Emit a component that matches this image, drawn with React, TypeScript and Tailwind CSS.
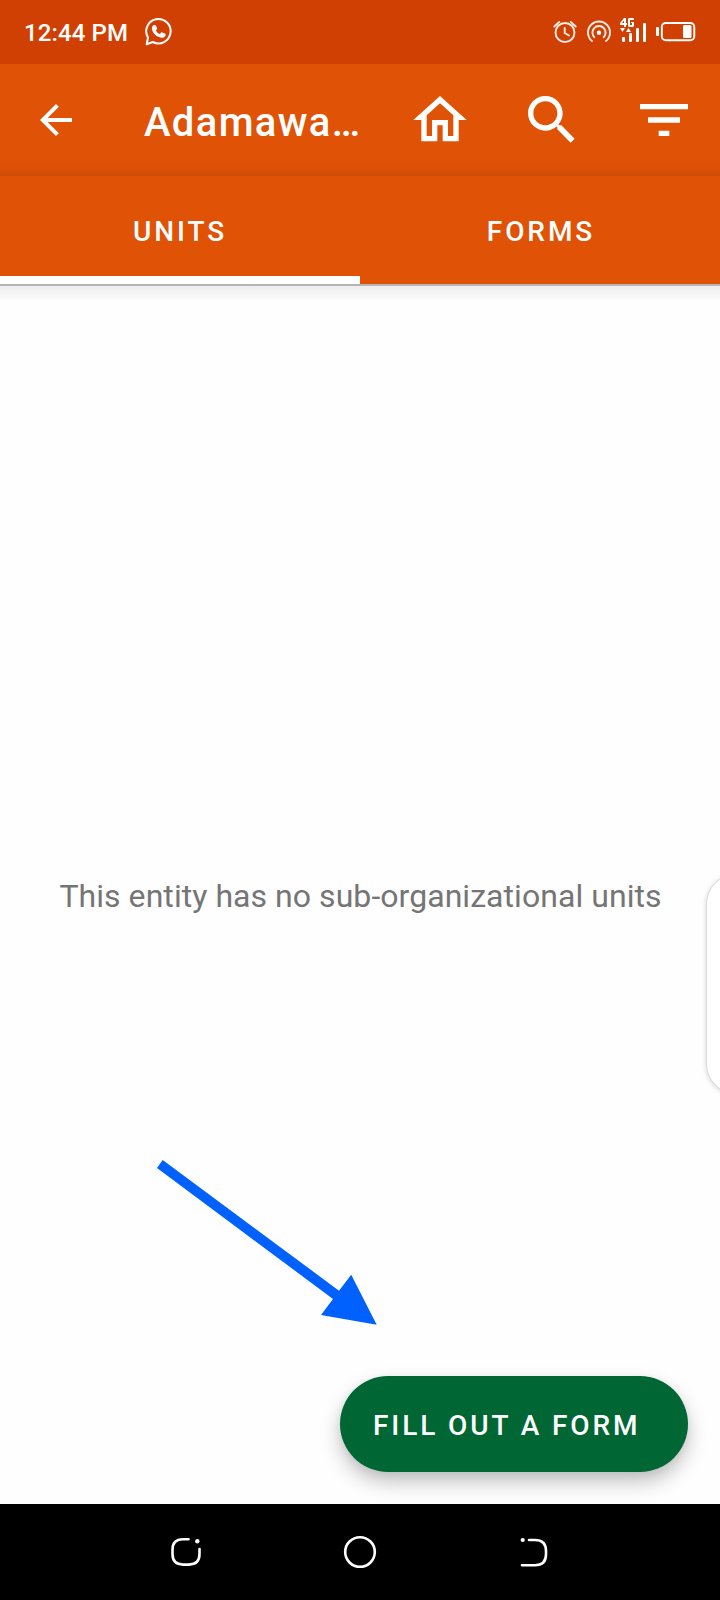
function WhatsAppIcon() {
  return (
    <svg className="ml-4 h-[30px] w-[30px]" viewBox="0 0 30 30" fill="none">
      <path d="M2.700 27.300 L4 20.500 A12.200 12.200 0 1 1 8.800 25 Z" stroke="#fff" strokeWidth="2" strokeLinejoin="round" />
      <path d="M9.900 8c.9-.3 1.700 0 2.100.8l1 2.200c.2.600 0 1.100-.3 1.500l-.8.9c.9 1.700 2.100 2.800 3.900 3.500l1.200-1.200c.4-.4.900-.5 1.400-.3l2.500 1.200c.6.200.8.8.7 1.400-.3 2-2.200 3-4.100 2.700-5.200-.8-9.100-4.700-9.600-9-.1-1.700.7-3.200 2-3.700z" fill="#fff" />
    </svg>
  );
}

function StatusIcons() {
  return (
    <svg className="ml-auto h-[64px] w-[150px]" viewBox="550 0 150 64" fill="none" stroke="#fff">
      <g stroke="#fff" strokeOpacity=".9">
        <circle cx="565" cy="32.500" r="9.500" strokeWidth="1.900" />
        <path d="M564.700 28v5l4.300 2.500" strokeWidth="1.900" strokeLinecap="round" />
        <path d="M554.300 26.500l5-4.600M575.700 26.500l-5-4.600" strokeWidth="1.900" strokeLinecap="round" />
        <path d="M592.600 41.500a11 11 0 1 1 12.800 0" strokeWidth="1.900" />
        <path d="M594.800 37.700a6.600 6.600 0 1 1 8.400 0" strokeWidth="1.900" />
      </g>
      <circle cx="599" cy="32.700" r="2.200" fill="#fff" stroke="none" />
      <g fill="#fff" stroke="none">
        <path d="M620 28h5l-2.500 4zM626 32h5l-2.500-4z" />
        <rect x="622" y="37" width="3" height="5" rx="1" />
        <rect x="629" y="33" width="3" height="9" rx="1" />
        <rect x="636" y="28" width="3" height="14" rx="1" />
        <rect x="643" y="23" width="3" height="19" rx="1" />
        <rect x="656" y="27" width="3" height="9" rx="1" />
        <rect x="683" y="25" width="8.500" height="13" rx="1.500" />
        <path d="M624 18h2v5h1v2h-1v2h-2v-2h-4v-2l4-5zM624 20.500L622 23h2z" />
        <path d="M629 18h4l1 1v1h-4v5h2v-2h-1v-1h3v4l-1 1h-4l-1-1v-7z" />
      </g>
      <rect x="661.800" y="23" width="32.500" height="17.200" rx="4" strokeWidth="1.900" />
    </svg>
  );
}

function Glyph({ d, className }: { d: string; className: string }) {
  return (
    <svg viewBox="0 0 24 24" fill="#fff" className={className}>
      <path d={d} />
    </svg>
  );
}

const BACK = "M20 11H7.830l5.590-5.590L12 4l-8 8 8 8 1.410-1.410L7.830 13H20v-2z";
const HOME = "M12 5.690l5 4.500V18h-2v-6H9v6H7v-7.810l5-4.500M12 3L2 12h3v8h6v-6h2v6h6v-8h3L12 3z";
const SEARCH =
  "M15.500 14h-.79l-.28-.27C15.410 12.590 16 11.110 16 9.500 16 5.910 13.090 3 9.500 3S3 5.910 3 9.500 5.910 16 9.500 16c1.610 0 3.090-.59 4.230-1.570l.27.28v.79l5 4.990L20.490 19l-4.990-5zm-6 0C7.010 14 5 11.990 5 9.500S7.010 5 9.500 5 14 7.010 14 9.500 11.990 14 9.500 14z";
const FILTER = "M10 18h4v-2h-4v2zM3 6v2h18V6H3zm3 7h12v-2H6v2z";

export default function App() {
  return (
    <div className="relative flex h-[1600px] w-[720px] flex-col overflow-hidden bg-[#fefefe] font-['Roboto',sans-serif]">
      <div className="flex h-16 shrink-0 items-center bg-[#d04002] pl-6 text-white">
        <span className="pt-0.5 text-[24px] leading-7 font-medium tracking-[0.12px] whitespace-nowrap">12:44 PM</span>
        <WhatsAppIcon />
        <div className="ml-auto pr-5">
          <StatusIcons />
        </div>
      </div>

      <header className="flex h-28 shrink-0 items-center bg-[linear-gradient(to_bottom,#e05206_0,#e05206_94px,#db5006_106px,#cc4b06_112px)] pr-6 pl-8 text-white">
        <Glyph d={BACK} className="h-12 w-12" />
        <h1 className="ml-16 w-[232px] pt-[5px] text-[40px] leading-[48px] font-medium tracking-[1.35px] whitespace-nowrap">
          Adamawa…
        </h1>
        <div className="ml-8 flex gap-12">
          <Glyph d={HOME} className="h-16 w-16" />
          <Glyph d={SEARCH} className="h-16 w-16" />
          <Glyph d={FILTER} className="h-16 w-16" />
        </div>
      </header>

      <nav className="flex h-[108px] shrink-0 bg-[#e05206] text-[28px] font-medium tracking-[2.9px] text-white">
        <div className="flex w-1/2 items-center justify-center border-b-8 border-white pt-3">UNITS</div>
        <div className="flex w-1/2 items-center justify-center pt-1 pl-0.5">FORMS</div>
      </nav>
      <div className="h-0.5 shrink-0 bg-[#b5b5b5]" />
      <div className="h-4 shrink-0 bg-gradient-to-b from-[#ededed] to-[#fefefe]" />

      <main className="flex flex-1 flex-col">
        <p className="mt-[575px] pl-px text-center text-[32px] leading-[38px] tracking-[0.05px] whitespace-nowrap text-[#757575]">
          This entity has no sub-organizational units
        </p>
        <button className="mt-auto mr-8 mb-8 flex h-24 w-[348px] items-center self-end rounded-full bg-[#006633] pt-1 pl-[33px] text-[28px] font-medium tracking-[2.9px] whitespace-nowrap text-white shadow-[0_10px_20px_rgba(0,0,0,0.24),0_2px_8px_rgba(0,0,0,0.06)]">
          FILL OUT A FORM
        </button>
      </main>

      <footer className="flex h-24 shrink-0 items-center bg-black">
        <svg viewBox="0 0 720 96" className="h-24 w-full" fill="none" stroke="#fff" strokeWidth="2.600" strokeLinecap="round">
          <path d="M188.500 35.300h-5.500q-10.500 0-10.500 10.500v4.300q0 10.500 10.500 10.500h6q10.500 0 10.500-10.500v-5" />
          <circle cx="197.300" cy="37.200" r="2.200" fill="#fff" stroke="none" />
          <circle cx="360" cy="48" r="14.800" />
          <path d="M529 36h6q11 0 11 11v3.300q0 11-11 11h-13" />
          <circle cx="522.700" cy="36" r="2.100" fill="#fff" stroke="none" />
        </svg>
      </footer>

      <div className="absolute top-[874px] left-[706px] h-[220px] w-[80px] rounded-[30px] border border-[#dadada] bg-white shadow-[0_1px_5px_rgba(0,0,0,0.16)]" />
      <svg className="absolute top-[1150px] left-[150px] h-[180px] w-[232px]" viewBox="150 1150 232 180">
        <path d="M162.700 1160L339 1290.700L351.200 1274.700L376.700 1324.700L321 1315L333 1299L157 1168Z" fill="#0061fe" />
      </svg>
    </div>
  );
}
